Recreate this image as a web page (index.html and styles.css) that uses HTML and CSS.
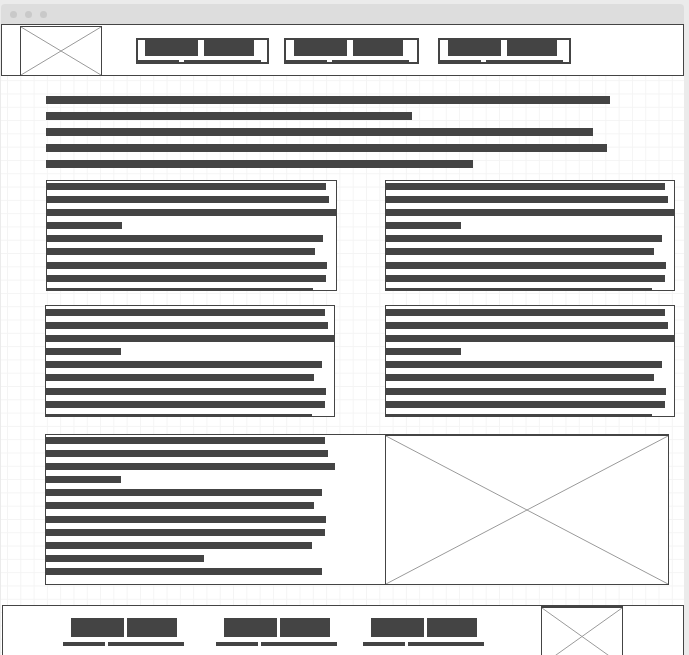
FILE: index.html
```html
<!DOCTYPE html>
<html lang="en">
<head>
  <meta charset="UTF-8">
  <title>Wireframe</title>
  <meta name="viewport" content="width=device-width, initial-scale=1">
  <link rel="stylesheet" href="styles.css">
</head>
<body>

<div class="window">
  <!-- Barra de ventana -->
  <div class="titlebar">
    <span class="dot"></span>
    <span class="dot"></span>
    <span class="dot"></span>
  </div>

  <div class="page">
    <!-- Cabecera -->
    <header class="top">
      <div class="placeholder logo">
        <svg viewBox="0 0 100 100" preserveAspectRatio="none">
          <line x1="0" y1="0" x2="100" y2="100"></line>
          <line x1="100" y1="0" x2="0" y2="100"></line>
        </svg>
      </div>
      <div class="tab tab-1">
        <div class="tab-words"><span class="word"></span><span class="word"></span></div>
        <div class="tab-line"><span></span><span></span></div>
      </div>
      <div class="tab tab-2">
        <div class="tab-words"><span class="word"></span><span class="word"></span></div>
        <div class="tab-line"><span></span><span></span></div>
      </div>
      <div class="tab tab-3">
        <div class="tab-words"><span class="word"></span><span class="word"></span></div>
        <div class="tab-line"><span></span><span></span></div>
      </div>
    </header>

    <!-- Introduccion -->
    <div class="intro">
      <div class="bar"></div>
      <div class="bar"></div>
      <div class="bar"></div>
      <div class="bar"></div>
      <div class="bar"></div>
    </div>

    <!-- Tarjetas -->
    <div class="cards">
      <div class="card lines">
        <div class="bar"></div><div class="bar"></div><div class="bar"></div>
        <div class="bar"></div><div class="bar"></div><div class="bar"></div>
        <div class="bar"></div><div class="bar"></div><div class="bar"></div>
      </div>
      <div class="card lines">
        <div class="bar"></div><div class="bar"></div><div class="bar"></div>
        <div class="bar"></div><div class="bar"></div><div class="bar"></div>
        <div class="bar"></div><div class="bar"></div><div class="bar"></div>
      </div>
      <div class="card card-low card-shift lines">
        <div class="bar"></div><div class="bar"></div><div class="bar"></div>
        <div class="bar"></div><div class="bar"></div><div class="bar"></div>
        <div class="bar"></div><div class="bar"></div><div class="bar"></div>
      </div>
      <div class="card card-low lines">
        <div class="bar"></div><div class="bar"></div><div class="bar"></div>
        <div class="bar"></div><div class="bar"></div><div class="bar"></div>
        <div class="bar"></div><div class="bar"></div><div class="bar"></div>
      </div>
    </div>

    <!-- Seccion con imagen -->
    <div class="feature">
      <div class="feature-text lines">
        <div class="bar"></div><div class="bar"></div><div class="bar"></div>
        <div class="bar"></div><div class="bar"></div><div class="bar"></div>
        <div class="bar"></div><div class="bar"></div><div class="bar"></div>
        <div class="bar"></div><div class="bar"></div>
      </div>
      <div class="placeholder feature-img">
        <svg viewBox="0 0 100 100" preserveAspectRatio="none">
          <line x1="0" y1="0" x2="100" y2="100"></line>
          <line x1="100" y1="0" x2="0" y2="100"></line>
        </svg>
      </div>
    </div>

    <!-- Pie -->
    <footer class="bottom">
      <div class="foot-group g1">
        <div class="foot-words"><span class="word"></span><span class="word"></span></div>
        <div class="foot-line"><span></span><span></span></div>
      </div>
      <div class="foot-group g2">
        <div class="foot-words"><span class="word"></span><span class="word"></span></div>
        <div class="foot-line"><span></span><span></span></div>
      </div>
      <div class="foot-group g3">
        <div class="foot-words"><span class="word"></span><span class="word"></span></div>
        <div class="foot-line"><span></span><span></span></div>
      </div>
      <div class="placeholder foot-img">
        <svg viewBox="0 0 100 100" preserveAspectRatio="none">
          <line x1="0" y1="0" x2="100" y2="100"></line>
          <line x1="100" y1="0" x2="0" y2="100"></line>
        </svg>
      </div>
    </footer>
  </div>
</div>

</body>
</html>
```

FILE: styles.css
```css
html, body {
  overflow: hidden;
}
body {
  margin: 0;
  padding: 0;
  background-color: #ebebeb;
  font-family: "Liberation Sans", Arial, sans-serif;
}
.window {
  width: 683px;
  margin: 4px 0 0 1px;
}
.titlebar {
  height: 20px;
  background-color: #dddddd;
  border-radius: 4px 4px 0 0;
  display: flex;
  align-items: center;
  gap: 8px;
  padding-left: 9px;
}
.dot {
  width: 7px;
  height: 7px;
  border-radius: 50%;
  background-color: #c9c9c9;
}
.page {
  height: 640px;
  background-color: #fff;
  background-image:
    linear-gradient(#f4f4f4 1px, transparent 1px),
    linear-gradient(90deg, #f4f4f4 1px, transparent 1px);
  background-size: 13.3px 13.3px;
  background-position: 6px 3px;
}

/* Placeholders con X */
.placeholder {
  border: 1px solid #444;
  background: #fff;
  box-sizing: border-box;
}
.placeholder svg {
  display: block;
  width: 100%;
  height: 100%;
}
.placeholder line {
  stroke: #9a9a9a;
  stroke-width: 1;
  vector-effect: non-scaling-stroke;
}

/* Cabecera */
.top {
  height: 52px;
  box-sizing: border-box;
  border: 1px solid #444;
  background: #fff;
  display: flex;
  align-items: flex-start;
}
.logo {
  width: 82px;
  height: 50px;
  margin: 1px 0 0 18px;
}
.tab {
  height: 26px;
  box-sizing: border-box;
  border: 2px solid #444;
  margin-top: 13px;
  display: flex;
  flex-direction: column;
  justify-content: space-between;
  background: #fff;
}
.tab-1 { width: 133px; margin-left: 34px; }
.tab-2 { width: 135px; margin-left: 15px; }
.tab-3 { width: 133px; margin-left: 19px; }
.tab-words {
  display: flex;
  gap: 6px;
  padding-left: 7px;
  margin-top: -1px;
}
.tab-2 .tab-words,
.tab-3 .tab-words {
  padding-left: 8px;
}
.word {
  display: block;
  height: 17px;
  background-color: #444;
}
.tab-words .word:first-child { width: 53px; }
.tab-words .word:last-child { width: 50px; }
.tab-line {
  display: flex;
  gap: 5px;
  height: 2px;
}
.tab-line span {
  background-color: #444;
}
.tab-line span:first-child { width: 41px; }
.tab-line span:last-child { width: 77px; }

/* Barras de texto */
.bar {
  background-color: #444;
}
.intro {
  padding: 20px 0 0 45px;
  display: flex;
  flex-direction: column;
  gap: 8px;
}
.intro .bar {
  height: 8px;
}
.intro .bar:nth-child(1) { width: 564px; }
.intro .bar:nth-child(2) { width: 366px; }
.intro .bar:nth-child(3) { width: 547px; }
.intro .bar:nth-child(4) { width: 561px; }
.intro .bar:nth-child(5) { width: 427px; }

.lines {
  display: flex;
  flex-direction: column;
  gap: 6.1px;
  padding-top: 2px;
  overflow: hidden;
  box-sizing: border-box;
}
.lines .bar {
  height: 7px;
  flex-shrink: 0;
}
.lines .bar:nth-child(1) { width: 279px; }
.lines .bar:nth-child(2) { width: 282px; }
.lines .bar:nth-child(3) { width: 289px; }
.lines .bar:nth-child(4) { width: 75px; }
.lines .bar:nth-child(5) { width: 276px; }
.lines .bar:nth-child(6) { width: 268px; }
.lines .bar:nth-child(7) { width: 280px; }
.lines .bar:nth-child(8) { width: 279px; }
.lines .bar:nth-child(9) { width: 266px; }
.lines .bar:nth-child(10) { width: 158px; }
.lines .bar:nth-child(11) { width: 276px; }

/* Tarjetas */
.cards {
  margin-top: 12px;
  padding-left: 45px;
  display: grid;
  grid-template-columns: 291px 290px;
  grid-template-rows: 111px 112px;
  column-gap: 48px;
  row-gap: 14px;
}
.card {
  border: 1px solid #444;
  background: #fff;
}
.card-low {
  padding-top: 3px;
}
.card-shift {
  margin-left: -1px;
  width: 290px;
}

/* Seccion con imagen */
.feature {
  margin: 17px 0 0 44px;
  width: 624px;
  height: 151px;
  box-sizing: border-box;
  border: 1px solid #444;
  background: #fff;
  display: flex;
}
.feature-text {
  width: 339px;
  height: 100%;
}
.feature-img {
  flex: 1;
  border-width: 2px 0 0 1px;
  margin-top: -1px;
}

/* Pie */
.bottom {
  margin: 20px 0 0 1px;
  width: 682px;
  height: 70px;
  box-sizing: border-box;
  border: 1px solid #444;
  background: #fff;
  display: flex;
  align-items: flex-start;
}
.foot-group {
  width: 121px;
  margin-top: 12px;
  display: flex;
  flex-direction: column;
  align-items: center;
}
.g1 { margin-left: 60px; }
.g2 { margin-left: 32px; }
.g3 { margin-left: 26px; }
.foot-words {
  display: flex;
  gap: 3px;
}
.foot-words .word {
  height: 19px;
}
.foot-words .word:first-child { width: 53px; }
.foot-words .word:last-child { width: 50px; }
.foot-line {
  display: flex;
  gap: 3px;
  margin-top: 5px;
}
.foot-line span {
  height: 4px;
  background-color: #444;
}
.foot-line span:first-child { width: 42px; }
.foot-line span:last-child { width: 76px; }
.foot-img {
  width: 82px;
  height: 60px;
  margin-left: 57px;
  border-top-width: 2px;
}
```
